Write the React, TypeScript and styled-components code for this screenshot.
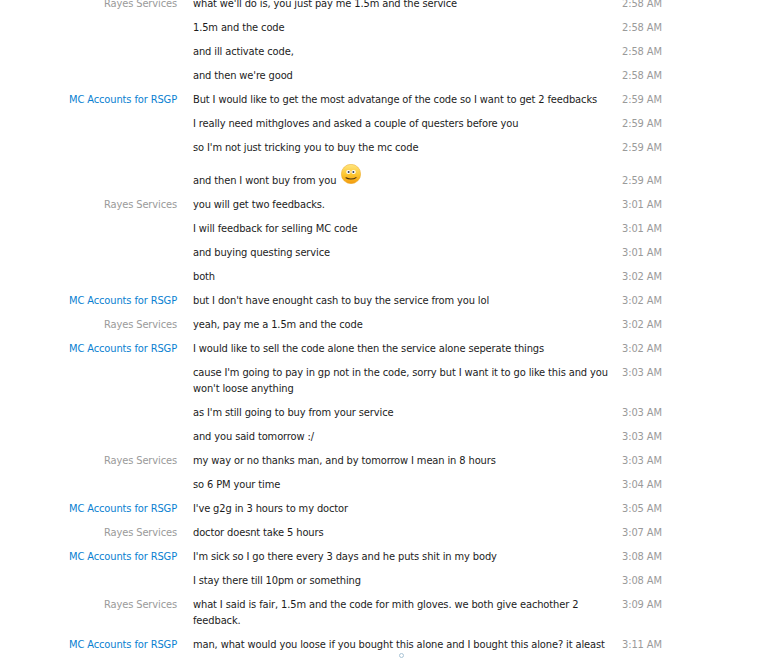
import React from 'react';
import styled, { createGlobalStyle } from 'styled-components';

const GlobalStyle = createGlobalStyle`
  html, body {
    margin: 0;
    padding: 0;
    height: 100%;
    background: #fff;
    overflow: hidden;
  }
`;

const Viewport = styled.div`
  display: flex;
  flex-direction: column;
  width: 777px;
  height: 659px;
  overflow: hidden;
  font-family: 'DejaVu Sans Condensed', 'DejaVu Sans', sans-serif;
  font-stretch: condensed;
  font-size: 11px;
  letter-spacing: -0.12px;
  line-height: 16px;
`;

const ScrollArea = styled.div`
  height: 653px;
  flex: none;
  overflow: hidden;
`;

const MessageList = styled.div`
  display: flex;
  flex-direction: column;
  margin-top: -8px;
`;

const Row = styled.div`
  display: grid;
  grid-template-columns: 177px 413px 40px;
  column-gap: 16px;
  padding: 4px 0;
`;

const Sender = styled.div<{ $seller: boolean }>`
  text-align: right;
  white-space: nowrap;
  color: ${(p) => (p.$seller ? '#0a7fd1' : '#9a9a9a')};
`;

const Body = styled.div`
  margin-right: -3px;
  color: #1c1c1c;
`;

const Time = styled.div`
  color: #9a9a9a;
  white-space: nowrap;
  align-self: start;
`;

const EmoticonRow = styled(Row)`
  padding-top: 13px;
`;

const SmileyIcon = styled.svg`
  width: 20px;
  height: 20px;
  margin: -10px 0 0 5px;
  vertical-align: 0;
`;

const ScrollDot = styled.div`
  flex: none;
  width: 5px;
  height: 5px;
  margin: 0 0 0 399px;
  border: 1px solid #a9c4d6;
  border-radius: 50%;
  box-sizing: border-box;
`;

const Smiley = () => (
  <SmileyIcon viewBox="0 0 20 20">
    <defs>
      <linearGradient id="face" x1="0" y1="0" x2="0" y2="1">
        <stop offset="0%" stopColor="#ffe680" />
        <stop offset="55%" stopColor="#fdc52f" />
        <stop offset="100%" stopColor="#f29a0e" />
      </linearGradient>
    </defs>
    <circle cx="10" cy="10" r="9.7" fill="url(#face)" stroke="#eba724" strokeWidth="0.5" />
    <ellipse cx="7.4" cy="8" rx="2.2" ry="1.9" fill="#fff" />
    <ellipse cx="12.6" cy="8" rx="2.2" ry="1.9" fill="#fff" />
    <circle cx="7.6" cy="8.1" r="1" fill="#343c58" />
    <circle cx="12.4" cy="8.1" r="1" fill="#343c58" />
    <path d="M5 13.8c2.4 1.7 7.4 1.7 10-.2" fill="none" stroke="#4a3410" strokeWidth="1.1" strokeLinecap="round" />
  </SmileyIcon>
);

type Message = { sender?: 'Rayes Services' | 'MC Accounts for RSGP'; text: string; time: string; smiley?: boolean };

const messages: Message[] = [
  { sender: 'Rayes Services', text: "what we'll do is, you just pay me 1.5m and the service", time: '2:58 AM' },
  { text: '1.5m and the code', time: '2:58 AM' },
  { text: 'and ill activate code,', time: '2:58 AM' },
  { text: "and then we're good", time: '2:58 AM' },
  { sender: 'MC Accounts for RSGP', text: 'But I would like to get the most advatange of the code so I want to get 2 feedbacks', time: '2:59 AM' },
  { text: 'I really need mithgloves and asked a couple of questers before you', time: '2:59 AM' },
  { text: "so I'm not just tricking you to buy the mc code", time: '2:59 AM' },
  { text: 'and then I wont buy from you', time: '2:59 AM', smiley: true },
  { sender: 'Rayes Services', text: 'you will get two feedbacks.', time: '3:01 AM' },
  { text: 'I will feedback for selling MC code', time: '3:01 AM' },
  { text: 'and buying questing service', time: '3:01 AM' },
  { text: 'both', time: '3:02 AM' },
  { sender: 'MC Accounts for RSGP', text: "but I don't have enought cash to buy the service from you lol", time: '3:02 AM' },
  { sender: 'Rayes Services', text: 'yeah, pay me a 1.5m and the code', time: '3:02 AM' },
  { sender: 'MC Accounts for RSGP', text: 'I would like to sell the code alone then the service alone seperate things', time: '3:02 AM' },
  { text: "cause I'm going to pay in gp not in the code, sorry but I want it to go like this and you won't loose anything", time: '3:03 AM' },
  { text: "as I'm still going to buy from your service", time: '3:03 AM' },
  { text: 'and you said tomorrow :/', time: '3:03 AM' },
  { sender: 'Rayes Services', text: 'my way or no thanks man, and by tomorrow I mean in 8 hours', time: '3:03 AM' },
  { text: 'so 6 PM your time', time: '3:04 AM' },
  { sender: 'MC Accounts for RSGP', text: "I've g2g in 3 hours to my doctor", time: '3:05 AM' },
  { sender: 'Rayes Services', text: 'doctor doesnt take 5 hours', time: '3:07 AM' },
  { sender: 'MC Accounts for RSGP', text: "I'm sick so I go there every 3 days and he puts shit in my body", time: '3:08 AM' },
  { text: 'I stay there till 10pm or something', time: '3:08 AM' },
  { sender: 'Rayes Services', text: 'what I said is fair, 1.5m and the code for mith gloves. we both give eachother 2 feedback.', time: '3:09 AM' },
  { sender: 'MC Accounts for RSGP', text: 'man, what would you loose if you bought this alone and I bought this alone? it aleast', time: '3:11 AM' },
];

const App: React.FC = () => (
  <Viewport>
    <GlobalStyle />
    <ScrollArea>
      <MessageList>
        {messages.map((m, i) => {
          const RowEl = m.smiley ? EmoticonRow : Row;
          return (
            <RowEl key={i}>
              <Sender $seller={m.sender === 'MC Accounts for RSGP'}>{m.sender}</Sender>
              <Body>
                {m.text}
                {m.smiley && <Smiley />}
              </Body>
              <Time>{m.time}</Time>
            </RowEl>
          );
        })}
      </MessageList>
    </ScrollArea>
    <ScrollDot />
  </Viewport>
);

export default App;
